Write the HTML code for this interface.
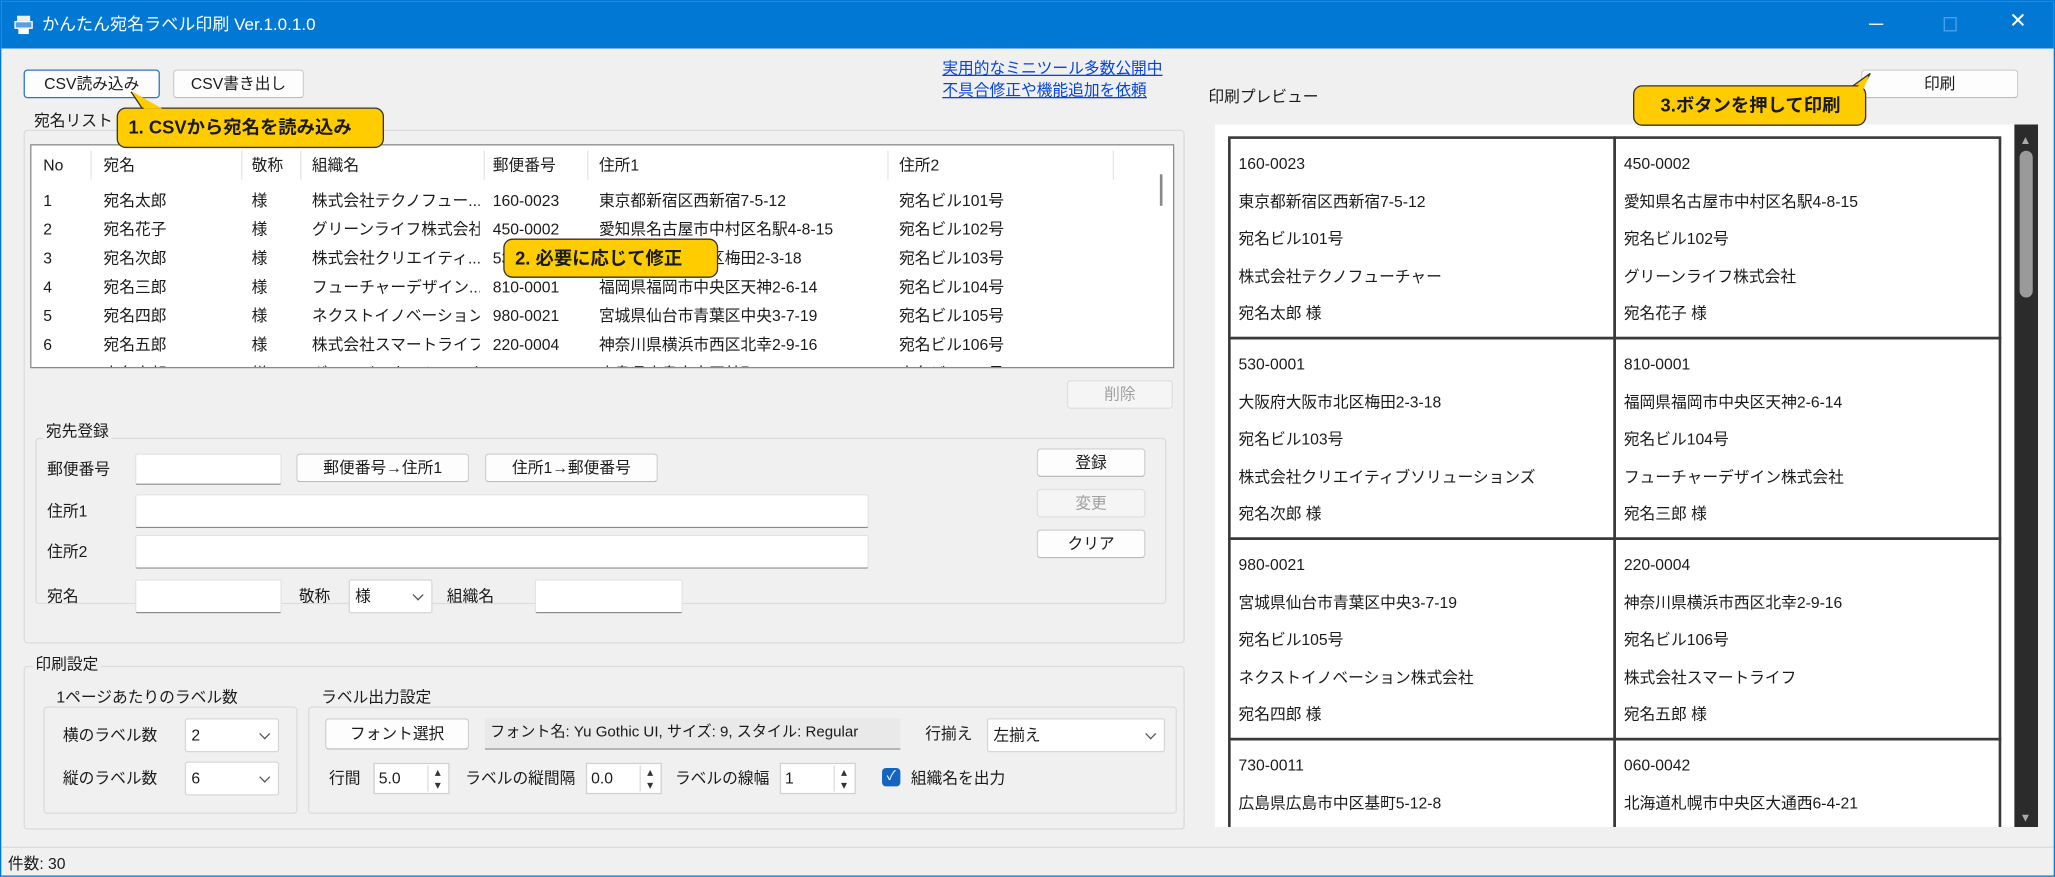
<!DOCTYPE html>
<html><head><meta charset="utf-8"><style>
*{box-sizing:border-box;margin:0;padding:0}
html,body{width:2055px;height:877px;overflow:hidden;background:#fff}
#w{position:absolute;left:0;top:0;width:1568px;height:669px;transform:scale(1.3106);transform-origin:0 0;background:#f0f0f0;font-family:"Liberation Sans","Noto Sans CJK JP",sans-serif;font-size:12px;line-height:16px;color:#1a1a1a;border:1px solid #0078d4;overflow:hidden}
.a{position:absolute;white-space:nowrap}
.tb{left:0;top:0;width:1566px;height:36px;background:#0078d4;color:#fff}
.btn{position:absolute;background:#fdfdfd;border:1px solid #d0d0d0;border-bottom-color:#bbb;border-radius:3px;text-align:center;line-height:20px;height:22px}
.dis{color:#a0a0a0;background:#f5f5f5;border-color:#e0e0e0}
.inp{position:absolute;background:#fff;border:1px solid #e3e3e3;border-bottom:1px solid #8a8a8a;border-radius:2px}
.grp{position:absolute;border:1px solid #dcdcdc;border-radius:3px}
.gl{position:absolute;background:#f0f0f0;padding:0 2px;line-height:14px}
.sel{position:absolute;background:#fff;border:1px solid #d8d8d8;border-radius:2px;padding-left:4px;line-height:24px}
.sel:after{content:"";position:absolute;right:7px;top:8px;width:5px;height:5px;border-right:1px solid #555;border-bottom:1px solid #555;transform:rotate(45deg)}
.num{position:absolute;background:#fff;border:1px solid #d0d0d0;padding-left:3px;line-height:22px;height:24px;width:58px}
.num:after{content:"▴\A▾";white-space:pre;position:absolute;right:1px;top:1px;width:14px;font-size:9px;line-height:10px;text-align:center;border-left:1px solid #ddd;color:#333}
.co{position:absolute;background:#ffcc00;border:1px solid #333;border-radius:7px;font-weight:bold;font-size:14px;line-height:28px;padding-left:8px}
.cell{position:absolute;width:296px;height:155px;border:2px solid #3a3a3a;font-size:12px}
.cell div{position:absolute;left:6px}
.col{position:absolute;top:31px;line-height:22px;overflow:hidden;white-space:nowrap}
</style></head><body><div id="w">
<div class="a tb"><span class="a" style="left:10px;top:11px;width:14px;height:14px;"><span style="position:absolute;left:2px;top:0;width:10px;height:4px;background:#eee"></span><span style="position:absolute;left:0;top:4px;width:14px;height:6px;background:#5aa0e0;border:1px solid #fff"></span><span style="position:absolute;left:3px;top:10px;width:8px;height:4px;background:#fff"></span></span><span class="a" style="left:31px;top:10px;font-size:13px">かんたん宛名ラベル印刷 Ver.1.0.1.0</span>
<span class="a" style="left:1425px;top:17px;width:11px;height:1px;background:#fff"></span>
<span class="a" style="left:1482px;top:12px;width:10px;height:11px;border:1px solid #4aa3ee"></span>
<span class="a" style="left:1532px;top:8px;font-size:16px;color:#fff">✕</span></div>

<div class="btn" style="left:17px;top:52px;width:104px;border:1px solid #2a78c8">CSV読み込み</div>
<div class="btn" style="left:131px;top:52px;width:100px">CSV書き出し</div>
<div class="a" style="left:718px;top:43px;color:#0645d6;text-decoration:underline;line-height:17px">実用的なミニツール多数公開中</div>
<div class="a" style="left:718px;top:60px;color:#0645d6;text-decoration:underline;line-height:17px">不具合修正や機能追加を依頼</div>

<div class="grp" style="left:17px;top:98px;width:886px;height:392px"></div>
<div class="gl" style="left:23px;top:84px">宛名リスト</div>
<div class="a" style="left:22px;top:109px;width:873px;height:171px;background:#fff;border:1px solid #8a8a8a;overflow:hidden">
<div class="a" style="left:45px;top:4px;width:1px;height:22px;background:#e5e5e5"></div>
<div class="a" style="left:160px;top:4px;width:1px;height:22px;background:#e5e5e5"></div>
<div class="a" style="left:205px;top:4px;width:1px;height:22px;background:#e5e5e5"></div>
<div class="a" style="left:345px;top:4px;width:1px;height:22px;background:#e5e5e5"></div>
<div class="a" style="left:424px;top:4px;width:1px;height:22px;background:#e5e5e5"></div>
<div class="a" style="left:653px;top:4px;width:1px;height:22px;background:#e5e5e5"></div>
<div class="a" style="left:825px;top:4px;width:1px;height:22px;background:#e5e5e5"></div>
<div class="a" style="left:861px;top:22px;width:2px;height:24px;background:#888"></div>
<div class="a" style="left:9px;top:7px">No</div><div class="a" style="left:55px;top:7px">宛名</div><div class="a" style="left:168px;top:7px">敬称</div><div class="a" style="left:214px;top:7px">組織名</div><div class="a" style="left:352px;top:7px">郵便番号</div><div class="a" style="left:433px;top:7px">住所1</div><div class="a" style="left:662px;top:7px">住所2</div>
<div class="col" style="left:9px;width:30px">1<br>2<br>3<br>4<br>5<br>6<br>7</div>
<div class="col" style="left:55px;width:100px">宛名太郎<br>宛名花子<br>宛名次郎<br>宛名三郎<br>宛名四郎<br>宛名五郎<br>宛名六郎</div>
<div class="col" style="left:168px;width:30px">様<br>様<br>様<br>様<br>様<br>様<br>様</div>
<div class="col" style="left:214px;width:128px">株式会社テクノフュー...<br>グリーンライフ株式会社<br>株式会社クリエイティ...<br>フューチャーデザイン...<br>ネクストイノベーション...<br>株式会社スマートライフ<br>グローバルネットワーク</div>
<div class="col" style="left:352px;width:70px">160-0023<br>450-0002<br>530-0001<br>810-0001<br>980-0021<br>220-0004<br>730-0011</div>
<div class="col" style="left:433px;width:216px">東京都新宿区西新宿7-5-12<br>愛知県名古屋市中村区名駅4-8-15<br>大阪府大阪市北区梅田2-3-18<br>福岡県福岡市中央区天神2-6-14<br>宮城県仙台市青葉区中央3-7-19<br>神奈川県横浜市西区北幸2-9-16<br>広島県広島市中区基町5-12-8</div>
<div class="col" style="left:662px;width:160px">宛名ビル101号<br>宛名ビル102号<br>宛名ビル103号<br>宛名ビル104号<br>宛名ビル105号<br>宛名ビル106号<br>宛名ビル107号</div>
</div>
<div class="btn dis" style="left:813px;top:289px;width:81px">削除</div>

<div class="grp" style="left:26px;top:333px;width:863px;height:127px"></div>
<div class="gl" style="left:32px;top:321px">宛先登録</div>
<div class="a" style="left:35px;top:349px">郵便番号</div>
<div class="inp" style="left:102px;top:345px;width:112px;height:24px"></div>
<div class="btn" style="left:225px;top:345px;width:132px">郵便番号→住所1</div>
<div class="btn" style="left:369px;top:345px;width:132px">住所1→郵便番号</div>
<div class="btn" style="left:790px;top:341px;width:83px">登録</div>
<div class="btn dis" style="left:790px;top:372px;width:83px">変更</div>
<div class="btn" style="left:790px;top:403px;width:83px">クリア</div>
<div class="a" style="left:35px;top:381px">住所1</div>
<div class="inp" style="left:102px;top:376px;width:560px;height:26px"></div>
<div class="a" style="left:35px;top:412px">住所2</div>
<div class="inp" style="left:102px;top:407px;width:560px;height:26px"></div>
<div class="a" style="left:35px;top:446px">宛名</div>
<div class="inp" style="left:102px;top:441px;width:112px;height:26px"></div>
<div class="a" style="left:227px;top:446px">敬称</div>
<div class="sel" style="left:265px;top:441px;width:64px;height:26px">様</div>
<div class="a" style="left:340px;top:446px">組織名</div>
<div class="inp" style="left:407px;top:441px;width:113px;height:26px"></div>

<div class="grp" style="left:17px;top:507px;width:886px;height:125px"></div>
<div class="gl" style="left:24px;top:499px">印刷設定</div>
<div class="grp" style="left:32px;top:538px;width:194px;height:82px"></div>
<div class="gl" style="left:40px;top:524px">1ページあたりのラベル数</div>
<div class="a" style="left:47px;top:552px">横のラベル数</div>
<div class="sel" style="left:140px;top:547px;width:72px;height:26px">2</div>
<div class="a" style="left:47px;top:585px">縦のラベル数</div>
<div class="sel" style="left:140px;top:580px;width:72px;height:26px">6</div>
<div class="grp" style="left:234px;top:538px;width:663px;height:82px"></div>
<div class="gl" style="left:242px;top:524px">ラベル出力設定</div>
<div class="btn" style="left:247px;top:547px;width:110px;height:24px;line-height:22px">フォント選択</div>
<div class="a" style="left:369px;top:547px;width:317px;height:24px;background:#e9e9e9;border-bottom:1px solid #999;padding-left:4px;line-height:22px;font-size:11.5px;overflow:hidden">フォント名: Yu Gothic UI, サイズ: 9, スタイル: Regular</div>
<div class="a" style="left:705px;top:551px">行揃え</div>
<div class="sel" style="left:752px;top:547px;width:136px;height:26px">左揃え</div>
<div class="a" style="left:250px;top:585px">行間</div>
<div class="num" style="left:284px;top:581px">5.0</div>
<div class="a" style="left:354px;top:585px">ラベルの縦間隔</div>
<div class="num" style="left:446px;top:581px">0.0</div>
<div class="a" style="left:514px;top:585px">ラベルの線幅</div>
<div class="num" style="left:594px;top:581px">1</div>
<div class="a" style="left:672px;top:585px;width:14px;height:14px;background:#1565c0;border-radius:3px;color:#fff;font-size:10px;line-height:14px;text-align:center">✓</div>
<div class="a" style="left:694px;top:585px">組織名を出力</div>

<div class="a" style="left:0;top:645px;width:1566px;height:1px;background:#dcdcdc"></div>
<div class="a" style="left:5px;top:650px">件数: 30</div>

<div class="a" style="left:921px;top:65px">印刷プレビュー</div>
<div class="btn" style="left:1419px;top:52px;width:120px">印刷</div>
<div class="a" style="left:926px;top:94px;width:610px;height:536px;background:#fff;overflow:hidden">
<div class="cell" style="left:10px;top:9px"><div style="top:11px">160-0023</div><div style="top:40px">東京都新宿区西新宿7-5-12</div><div style="top:68px">宛名ビル101号</div><div style="top:97px">株式会社テクノフューチャー</div><div style="top:125px">宛名太郎 様</div></div>
<div class="cell" style="left:304px;top:9px"><div style="top:11px">450-0002</div><div style="top:40px">愛知県名古屋市中村区名駅4-8-15</div><div style="top:68px">宛名ビル102号</div><div style="top:97px">グリーンライフ株式会社</div><div style="top:125px">宛名花子 様</div></div>
<div class="cell" style="left:10px;top:162px"><div style="top:11px">530-0001</div><div style="top:40px">大阪府大阪市北区梅田2-3-18</div><div style="top:68px">宛名ビル103号</div><div style="top:97px">株式会社クリエイティブソリューションズ</div><div style="top:125px">宛名次郎 様</div></div>
<div class="cell" style="left:304px;top:162px"><div style="top:11px">810-0001</div><div style="top:40px">福岡県福岡市中央区天神2-6-14</div><div style="top:68px">宛名ビル104号</div><div style="top:97px">フューチャーデザイン株式会社</div><div style="top:125px">宛名三郎 様</div></div>
<div class="cell" style="left:10px;top:315px"><div style="top:11px">980-0021</div><div style="top:40px">宮城県仙台市青葉区中央3-7-19</div><div style="top:68px">宛名ビル105号</div><div style="top:97px">ネクストイノベーション株式会社</div><div style="top:125px">宛名四郎 様</div></div>
<div class="cell" style="left:304px;top:315px"><div style="top:11px">220-0004</div><div style="top:40px">神奈川県横浜市西区北幸2-9-16</div><div style="top:68px">宛名ビル106号</div><div style="top:97px">株式会社スマートライフ</div><div style="top:125px">宛名五郎 様</div></div>
<div class="cell" style="left:10px;top:468px"><div style="top:11px">730-0011</div><div style="top:40px">広島県広島市中区基町5-12-8</div></div>
<div class="cell" style="left:304px;top:468px"><div style="top:11px">060-0042</div><div style="top:40px">北海道札幌市中央区大通西6-4-21</div></div>
</div>
<div class="a" style="left:1536px;top:94px;width:18px;height:536px;background:#2b2b2b"></div>
<div class="a" style="left:1540px;top:98px;font-size:9px;color:#aaa">▲</div>
<div class="a" style="left:1540px;top:615px;font-size:9px;color:#aaa">▼</div>
<div class="a" style="left:1540px;top:114px;width:10px;height:112px;background:#9a9a9a;border-radius:5px"></div>

<svg class="a" style="left:95px;top:68px" width="40" height="20"><path d="M4 1 L14 16 L30 16" fill="#ffcc00" stroke="#333"/></svg>
<div class="co" style="left:88px;top:81px;width:204px;height:31px">1. CSVから宛名を読み込み</div>
<svg class="a" style="left:97px;top:69px" width="30" height="14"><path d="M3 0 L12 13 L26 13 Z" fill="#ffcc00"/></svg>
<div class="co" style="left:383px;top:181px;width:164px;height:30px">2. 必要に応じて修正</div>
<svg class="a" style="left:1400px;top:53px" width="30" height="22"><path d="M1 20 L26 2 L16 20" fill="#ffcc00" stroke="#333"/></svg>
<div class="co" style="left:1245px;top:64px;width:178px;height:31px;padding-left:20px">3.ボタンを押して印刷</div>
<svg class="a" style="left:1405px;top:56px" width="24" height="20"><path d="M0 20 L20 1 L12 20 Z" fill="#ffcc00"/></svg>
</div></body></html>
